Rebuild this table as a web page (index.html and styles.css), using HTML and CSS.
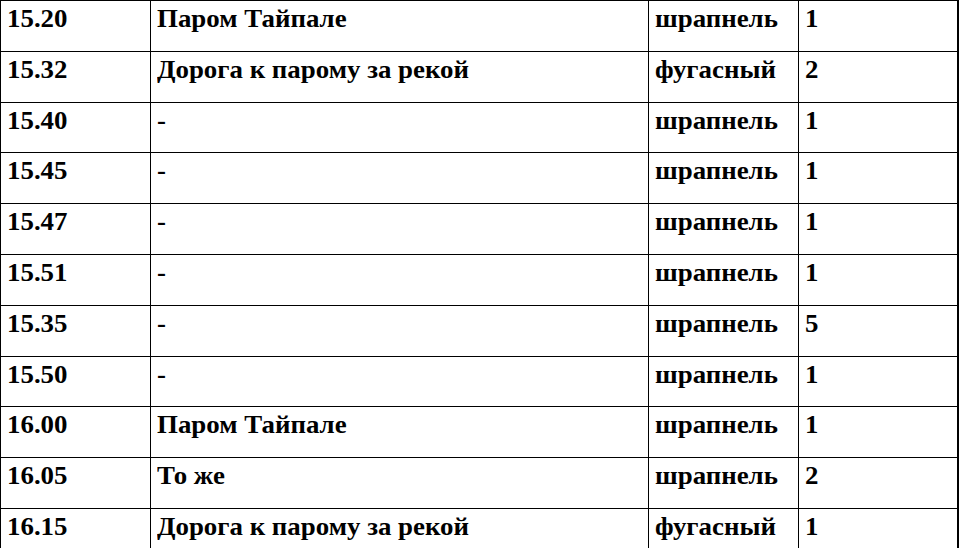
FILE: index.html
```html
<!DOCTYPE html>
<html lang="ru">
<head>
<meta charset="utf-8">
<link rel="stylesheet" href="styles.css">
</head>
<body>
<table class="log">
  <colgroup>
    <col class="c-time">
    <col class="c-target">
    <col class="c-type">
    <col class="c-count">
  </colgroup>
  <tbody>
    <tr><td><span>15.20</span></td><td><span>Паром Тайпале</span></td><td><span>шрапнель</span></td><td><span>1</span></td></tr>
    <tr><td><span>15.32</span></td><td><span>Дорога к парому за рекой</span></td><td><span>фугасный</span></td><td><span>2</span></td></tr>
    <tr><td><span>15.40</span></td><td><span>-</span></td><td><span>шрапнель</span></td><td><span>1</span></td></tr>
    <tr><td><span>15.45</span></td><td><span>-</span></td><td><span>шрапнель</span></td><td><span>1</span></td></tr>
    <tr><td><span>15.47</span></td><td><span>-</span></td><td><span>шрапнель</span></td><td><span>1</span></td></tr>
    <tr><td><span>15.51</span></td><td><span>-</span></td><td><span>шрапнель</span></td><td><span>1</span></td></tr>
    <tr><td><span>15.35</span></td><td><span>-</span></td><td><span>шрапнель</span></td><td><span>5</span></td></tr>
    <tr><td><span>15.50</span></td><td><span>-</span></td><td><span>шрапнель</span></td><td><span>1</span></td></tr>
    <tr><td><span>16.00</span></td><td><span>Паром Тайпале</span></td><td><span>шрапнель</span></td><td><span>1</span></td></tr>
    <tr><td><span>16.05</span></td><td><span>То же</span></td><td><span>шрапнель</span></td><td><span>2</span></td></tr>
    <tr><td><span>16.15</span></td><td><span>Дорога к парому за рекой</span></td><td><span>фугасный</span></td><td><span>1</span></td></tr>
  </tbody>
</table>
</body>
</html>
```

FILE: styles.css
```css
html, body {
  margin: 0;
  padding: 0;
  background: #fff;
  overflow: hidden;
}

.log {
  border-collapse: collapse;
  table-layout: fixed;
  width: 957px;
  font-family: "Liberation Serif", "DejaVu Serif", serif;
  font-weight: 700;
  font-size: 25px;
  line-height: 25px;
  color: #000;
}

.c-time { width: 150px; }
.c-target { width: 498px; }
.c-type { width: 150px; }
.c-count { width: 159px; }

.log td {
  border: 1px solid #000;
  height: 50.8px;
  box-sizing: border-box;
  padding: 5px 0 0 6px;
  vertical-align: top;
  white-space: nowrap;
  overflow: hidden;
}

.log td span {
  display: inline-block;
  transform: scaleX(1.075);
  transform-origin: left top;
}

.log td:last-child {
  border-right-width: 2px;
}
```
